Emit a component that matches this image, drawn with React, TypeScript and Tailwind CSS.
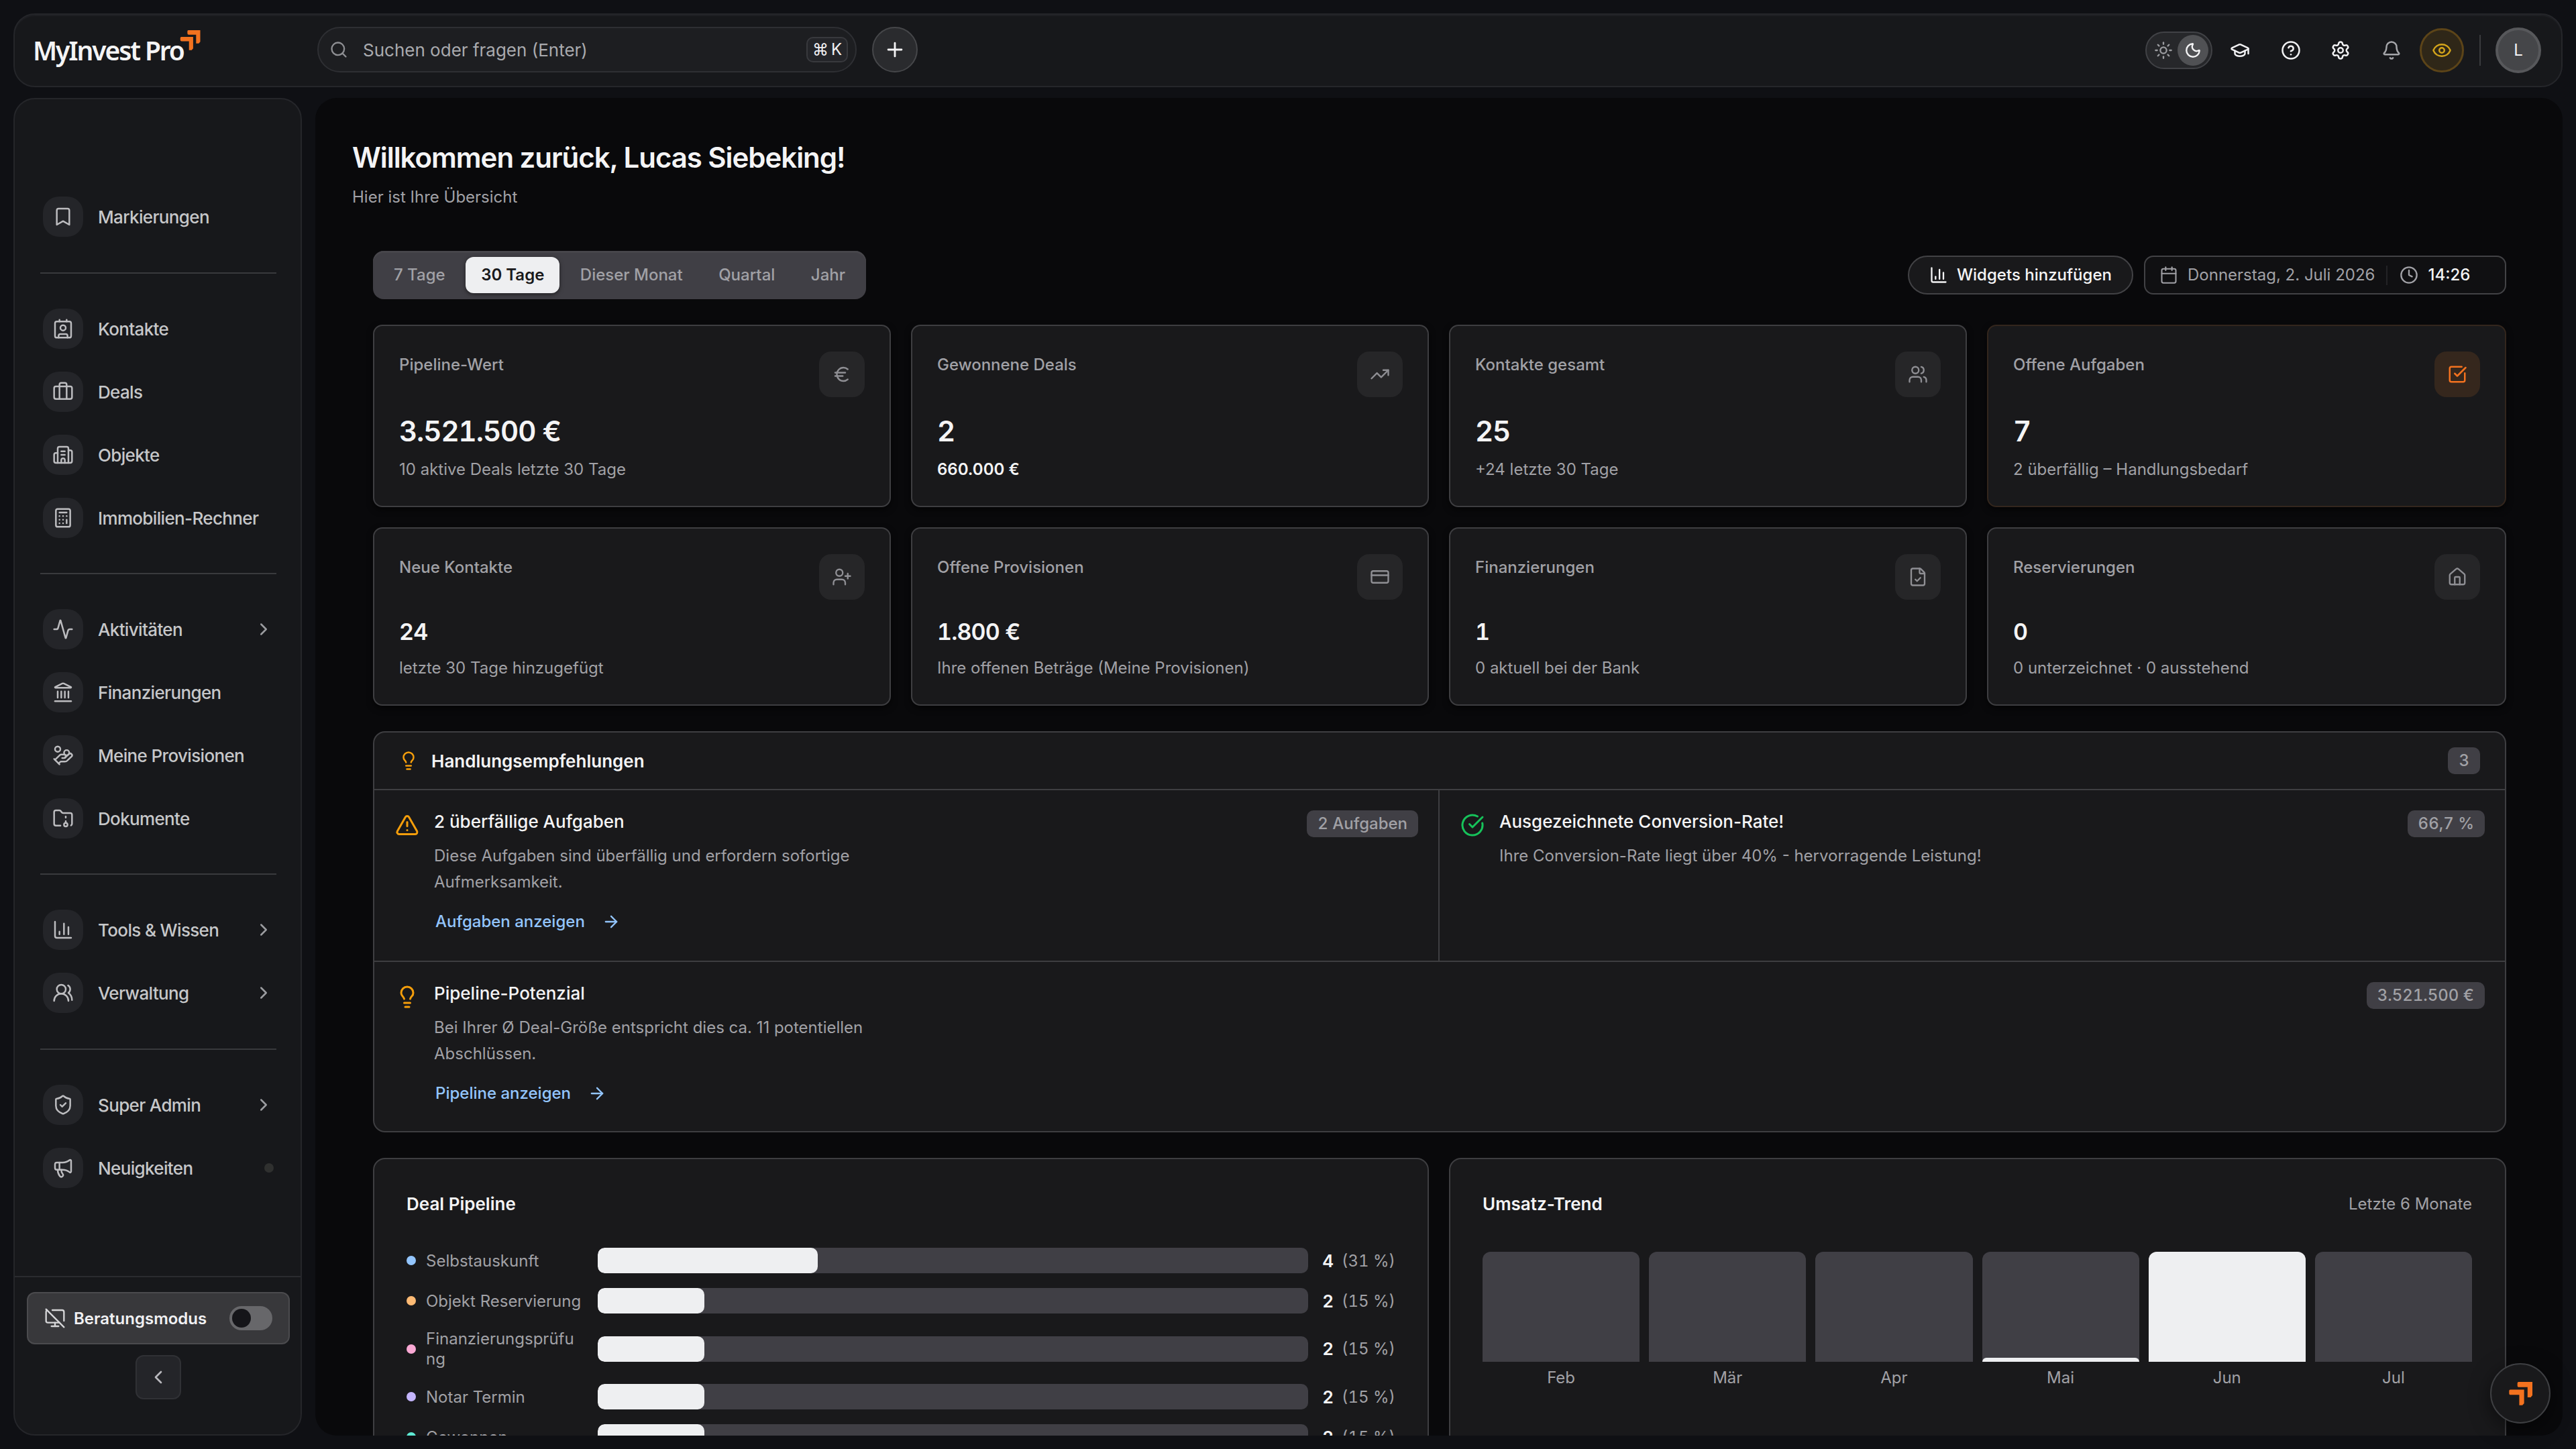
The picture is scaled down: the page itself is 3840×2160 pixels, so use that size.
import type { ReactNode } from "react";
import {
  Activity, ArrowRight, Bell, Bookmark, Briefcase, Building2, Calculator, Calendar, ChartColumn,
  ChevronLeft, ChevronRight, CircleCheckBig, CircleQuestionMark, Clock, Contact, CreditCard, Euro, Eye,
  FileCheck, FolderArchive, GraduationCap, HandCoins, House, Landmark, Lightbulb, Megaphone, MonitorOff,
  Moon, Plus, Search, Settings, ShieldCheck, SquareCheckBig, Sun, TrendingUp, TriangleAlert, UserPlus,
  Users, UsersRound, type LucideIcon,
} from "lucide-react";

function ArrowMark({ className }: { className: string }) {
  return (
    <svg viewBox="0 0 34 34" className={className} fill="#f3721f">
      <path d="M14 0H34V19.5L31.5 22.3H27V7.6H14.5Q12.3 7.6 12.3 5V2Q12.3 0 14 0Z" />
      <path d="M2 11.2H22V31L19.5 33.8H15V18.8H2.5Q0.3 18.8 0.3 16.2V13.2Q0.3 11.2 2 11.2Z" />
    </svg>
  );
}

type NavItem = { label: string; icon: LucideIcon; more?: boolean; dot?: boolean };

const navGroups: NavItem[][] = [
  [{ label: "Markierungen", icon: Bookmark }],
  [
    { label: "Kontakte", icon: Contact },
    { label: "Deals", icon: Briefcase },
    { label: "Objekte", icon: Building2 },
    { label: "Immobilien-Rechner", icon: Calculator },
  ],
  [
    { label: "Aktivitäten", icon: Activity, more: true },
    { label: "Finanzierungen", icon: Landmark },
    { label: "Meine Provisionen", icon: HandCoins },
    { label: "Dokumente", icon: FolderArchive },
  ],
  [
    { label: "Tools & Wissen", icon: ChartColumn, more: true },
    { label: "Verwaltung", icon: UsersRound, more: true },
  ],
  [
    { label: "Super Admin", icon: ShieldCheck, more: true },
    { label: "Neuigkeiten", icon: Megaphone, dot: true },
  ],
];

function Sidebar() {
  return (
    <aside className="flex w-[430px] shrink-0 flex-col rounded-[32px] border-2 border-[#25262a] bg-[#17181b]">
      <nav className="flex-1 pt-[145px] pl-[38px] pr-[36px]">
        {navGroups.map((group, gi) => (
          <div key={gi}>
            {gi > 0 && <div className={`${gi === 1 || gi === 4 ? "mt-[53px]" : "mt-[52px]"} mb-[52px] h-[2px] bg-[#393a3d]`} />}
            <div className="flex flex-col gap-[34px]">
              {group.map(({ label, icon: Icon, more, dot }) => (
                <div key={label} className="flex h-[60px] items-center pl-1">
                  <span className="flex size-[60px] items-center justify-center rounded-[24px] bg-[#242529]">
                    <Icon className="size-8 text-[#bdbdc0]" strokeWidth={1.85} />
                  </span>
                  <span className="ml-[22px] text-[26px] font-medium tracking-tight whitespace-nowrap text-[#c6c7c9]">{label}</span>
                  {more && <ChevronRight className="mr-[4px] ml-auto size-[30px] text-[#9b9ca0]" strokeWidth={2} />}
                  {dot && <span className="mr-[4px] ml-auto size-[14px] rounded-full bg-[#2f302f]" />}
                </div>
              ))}
            </div>
          </div>
        ))}
      </nav>
      <div className="flex h-[236px] flex-col items-center border-t-2 border-[#2a2b2f] pt-[22px] pl-[2px]">
        <div className="flex h-[78px] w-[392px] items-center rounded-[12px] border-2 border-[#4b4b4e] bg-[#38383b] pr-6 pl-6">
          <MonitorOff className="size-[32px] text-[#d6d6d8]" strokeWidth={1.75} />
          <span className="ml-[12px] pt-[1px] text-[24px] font-semibold text-[#f1f1f3]">Beratungsmodus</span>
          <span className="ml-auto flex h-9 w-16 items-center rounded-full bg-[#67676a] px-1">
            <span className="size-7 rounded-full bg-[#151519]" />
          </span>
        </div>
        <button className="mt-4 flex h-[66px] w-[68px] items-center justify-center rounded-[12px] border-2 border-[#303135] bg-[#242529]">
          <ChevronLeft className="size-8 text-[#b9b9bd]" strokeWidth={2} />
        </button>
      </div>
    </aside>
  );
}

function Header() {
  return (
    <header className="flex h-[110px] shrink-0 items-center rounded-[32px] border-2 border-[#25262a] bg-[#17181b] pr-[30px] pl-[27px] shadow-[inset_0_2px_0_#1e1f23]">
      <div className="relative w-[424px] shrink-0">
        <span className="font-['Noto_Sans'] text-[39px] leading-[60px] font-semibold tracking-[-2.15px] whitespace-nowrap text-[#f4f4f5]">MyInvest Pro</span>
        <ArrowMark className="absolute top-0 left-[219px] h-[30px] w-[31px]" />
      </div>
      <div className="mb-[2px] flex h-[68px] w-[804px] items-center rounded-full border-2 border-[#2e2f33] bg-[#1d1e21] pr-[11px] pl-4">
        <Search className="size-[28px] text-[#8e8f93]" strokeWidth={2} />
        <span className="ml-[22px] text-[26px] whitespace-nowrap text-[#a9aaae]">Suchen oder fragen (Enter)</span>
        <kbd className="ml-auto flex h-[38px] w-[62px] items-center justify-center gap-[4px] rounded-[10px] border-2 border-[#38393d] bg-[#242529] font-[Inter] text-[24px] text-[#f1f1f3]">
          <span>⌘</span><span>K</span>
        </kbd>
      </div>
      <button className="mb-[2px] ml-[23px] flex size-[68px] items-center justify-center rounded-full border-2 border-[#46474a] bg-[#2a2b2e]">
        <Plus className="size-[34px] text-[#f4f4f5]" strokeWidth={2} />
      </button>

      <div className="mb-[1px] ml-auto flex items-center">
        <div className="flex h-[56px] w-[100px] items-center rounded-full border-2 border-[#414246] bg-[#26272a] pr-1 pl-[11px]">
          <Sun className="size-[28px] text-[#9c9da1]" strokeWidth={2} />
          <span className="ml-auto flex size-[46px] items-center justify-center rounded-full bg-[#505154]">
            <Moon className="size-[26px] text-[#f4f4f5]" strokeWidth={2.2} />
          </span>
        </div>
        <GraduationCap className="ml-[26px] size-[30px] text-[#f1f1f3]" strokeWidth={2} />
        <CircleQuestionMark className="ml-[46px] size-[30px] text-[#f1f1f3]" strokeWidth={2} />
        <Settings className="ml-[44px] size-[30px] text-[#f1f1f3]" strokeWidth={2} />
        <Bell className="ml-[46px] size-[30px] text-[#a5a6aa]" strokeWidth={2} />
        <span className="ml-[27px] flex size-[66px] items-center justify-center rounded-full border-[3px] border-[#5c4418] bg-[#2f2718]">
          <Eye className="size-[30px] text-[#d3a41b]" strokeWidth={2} />
        </span>
        <span className="ml-[23px] h-[46px] w-[2px] bg-[#3a3b3e]" />
        <span className="ml-[22px] flex size-[68px] items-center justify-center rounded-full border-4 border-[#57585b] bg-[#454649] text-[24px] text-[#f4f4f5]">L</span>
      </div>
    </header>
  );
}

const ranges = ["7 Tage", "30 Tage", "Dieser Monat", "Quartal", "Jahr"];

function Toolbar() {
  return (
    <div className="flex h-[72px] items-center">
      <div className="flex h-[72px] items-center gap-[7.5px] rounded-[16px] bg-[#403f45] px-2 shadow-[inset_0_3px_0_#47464b]">
        {ranges.map((r) => (
          <span
            key={r}
            className={
              r === "30 Tage"
                ? "flex h-[54px] items-center rounded-[12px] bg-[#eeeff1] px-[23px] text-[24px] font-semibold text-[#19191b] shadow-[0_2px_6px_rgba(0,0,0,0.5)]"
                : "flex h-[54px] items-center px-[23px] text-[24px] font-medium text-[#a1a1a6]"
            }
          >
            {r}
          </span>
        ))}
      </div>
      <button className="ml-auto flex h-[58px] w-[336px] items-center rounded-full border-2 border-[#424245] bg-[#19191b] pl-[30px] text-[24px] font-medium whitespace-nowrap text-[#f4f4f5]">
        <ChartColumn className="size-[28px]" strokeWidth={2} />
        <span className="ml-[13px]">Widgets hinzufügen</span>
      </button>
      <div className="ml-4 flex h-[58px] w-[540px] items-center rounded-[14px] border-2 border-[#424245] bg-[#101012] pl-[21px] text-[24px] whitespace-nowrap text-[#a1a1a6]">
        <Calendar className="size-[28px]" strokeWidth={1.75} />
        <span className="ml-[14px]">Donnerstag, 2. Juli 2026</span>
        <span className="ml-[17px] h-[29px] w-[2px] bg-[#232326]" />
        <Clock className="ml-[18px] size-[28px]" strokeWidth={2} />
        <span className="ml-[14px] font-medium text-[#f4f4f5]">14:26</span>
      </div>
    </div>
  );
}

type Kpi = { label: string; icon: LucideIcon; value: string; note: string; strong?: boolean; alert?: boolean };

const kpisTop: Kpi[] = [
  { label: "Pipeline-Wert", icon: Euro, value: "3.521.500 €", note: "10 aktive Deals letzte 30 Tage" },
  { label: "Gewonnene Deals", icon: TrendingUp, value: "2", note: "660.000 €", strong: true },
  { label: "Kontakte gesamt", icon: Users, value: "25", note: "+24 letzte 30 Tage" },
  { label: "Offene Aufgaben", icon: SquareCheckBig, value: "7", note: "2 überfällig – Handlungsbedarf", alert: true },
];
const kpisBottom: Kpi[] = [
  { label: "Neue Kontakte", icon: UserPlus, value: "24", note: "letzte 30 Tage hinzugefügt" },
  { label: "Offene Provisionen", icon: CreditCard, value: "1.800 €", note: "Ihre offenen Beträge (Meine Provisionen)" },
  { label: "Finanzierungen", icon: FileCheck, value: "1", note: "0 aktuell bei der Bank" },
  { label: "Reservierungen", icon: House, value: "0", note: "0 unterzeichnet · 0 ausstehend" },
];

function KpiCard({ kpi, large }: { kpi: Kpi; large?: boolean }) {
  const Icon = kpi.icon;
  return (
    <div
      className={`${large ? "h-[272px]" : "h-[266px]"} ${kpi.alert ? "border-[#33261d]" : "border-[#3e3e41]"} rounded-[14px] border-2 bg-[#19191b] pt-[38px] pr-[37px] pl-[37px] shadow-[0_4px_10px_rgba(0,0,0,0.6)]`}
    >
      <div className="flex items-start justify-between">
        <span className="text-[24px] leading-[40px] font-medium text-[#a1a1a6]">{kpi.label}</span>
        <span className={`flex size-[68px] items-center justify-center rounded-[18px] ${kpi.alert ? "bg-[#35271d] text-[#f3721f]" : "bg-[#262628] text-[#8f8f94]"}`}>
          <Icon className="mb-px size-[30px]" strokeWidth={kpi.alert ? 2 : 1.9} />
        </span>
      </div>
      <div className={`font-semibold tracking-[-0.025em] text-[#f4f4f5] tabular-nums ${large ? "mt-[27px] text-[42px] leading-[48px]" : "mt-[26px] text-[34px] leading-[44px]"}`}>
        {kpi.value}
      </div>
      <div className={`text-[24px] leading-[36px] ${large ? "mt-[15px]" : "mt-[14px]"} ${kpi.strong ? "font-semibold text-[#f4f4f5]" : "text-[#a1a1a6]"}`}>
        {kpi.note}
      </div>
    </div>
  );
}

function Badge({ children }: { children: ReactNode }) {
  return (
    <span className="flex h-10 shrink-0 items-center rounded-[10px] bg-[#403f45] px-4 text-[24px] font-medium whitespace-nowrap text-[#a1a1a6] tabular-nums">{children}</span>
  );
}

function Advice({ icon, title, lines, link, badge }: { icon: ReactNode; title: string; lines: string[]; link?: string; badge: string }) {
  return (
    <div className="flex flex-1 items-start pt-[29px] pr-[30px] pl-[31px]">
      <span className="mt-[5px] size-[36px] shrink-0">{icon}</span>
      <div className="ml-[22px]">
        <div className="text-[26px] leading-[36px] font-medium text-[#f4f4f5]">{title}</div>
        <div className="mt-[13px] text-[24px] leading-[39px] text-[#a1a1a6]">
          {lines.map((l) => <div key={l}>{l}</div>)}
        </div>
        {link && (
          <div className="mt-[22px] flex items-center pl-[2px] text-[24px] leading-[36px] font-medium text-[#93c5fd]">
            {link}
            <ArrowRight className="ml-[25px] size-[28px]" strokeWidth={2} />
          </div>
        )}
      </div>
      <span className="mt-px ml-auto"><Badge>{badge}</Badge></span>
    </div>
  );
}

function Recommendations() {
  return (
    <section className="mt-[38px] flex h-[598px] flex-col overflow-hidden rounded-[18px] border-2 border-[#3e3e41] bg-[#19191b]">
      <div className="flex h-[86px] shrink-0 items-center border-b-2 border-[#3e3e41] pr-[37px] pl-[36px]">
        <Lightbulb className="size-[30px] text-[#f59e0b]" strokeWidth={2} />
        <span className="ml-[19px] text-[26px] font-semibold text-[#f4f4f5]">Handlungsempfehlungen</span>
        <span className="ml-auto"><Badge>3</Badge></span>
      </div>
      <div className="flex h-[256px] shrink-0 border-b-2 border-[#3e3e41]">
        <div className="flex w-[1588px] border-r-2 border-[#3e3e41]">
          <Advice
            icon={<TriangleAlert className="size-[36px] text-[#f59e0b]" strokeWidth={2} />}
            title="2 überfällige Aufgaben"
            lines={["Diese Aufgaben sind überfällig und erfordern sofortige", "Aufmerksamkeit."]}
            link="Aufgaben anzeigen"
            badge="2 Aufgaben"
          />
        </div>
        <Advice
          icon={<CircleCheckBig className="size-[36px] text-[#16c25a]" strokeWidth={2} />}
          title="Ausgezeichnete Conversion-Rate!"
          lines={["Ihre Conversion-Rate liegt über 40% - hervorragende Leistung!"]}
          badge="66,7 %"
        />
      </div>
      <Advice
        icon={<Lightbulb className="size-[36px] text-[#f59e0b]" strokeWidth={2} />}
        title="Pipeline-Potenzial"
        lines={["Bei Ihrer Ø Deal-Größe entspricht dies ca. 11 potentiellen", "Abschlüssen."]}
        link="Pipeline anzeigen"
        badge="3.521.500 €"
      />
    </section>
  );
}

const stages = [
  { label: "Selbstauskunft", color: "#93c5fd", count: 4, share: 31 },
  { label: "Objekt Reservierung", color: "#fdba74", count: 2, share: 15 },
  { label: "Finanzierungsprüfung", color: "#f9a8d4", count: 2, share: 15 },
  { label: "Notar Termin", color: "#c4b5fd", count: 2, share: 15 },
  { label: "Gewonnen", color: "#5eead4", count: 2, share: 15 },
];

const months = [
  { label: "Feb", value: 0 },
  { label: "Mär", value: 0 },
  { label: "Apr", value: 0 },
  { label: "Mai", value: 3.8 },
  { label: "Jun", value: 100 },
  { label: "Jul", value: 0 },
];

function Charts() {
  return (
    <div className="mt-[38px] grid grid-cols-[1574px_1fr] gap-[30px]">
      <section className="h-[600px] rounded-[18px] border-2 border-[#3e3e41] bg-[#19191b] pt-[48px] pr-[48px] pl-[48px]">
        <h2 className="text-[26px] leading-[38px] font-semibold text-[#f4f4f5]">Deal Pipeline</h2>
        <div className="mt-[46px] flex flex-col gap-[22px]">
          {stages.map((s) => (
            <div key={s.label} className="flex min-h-[38px] items-center">
              <span className="size-[14px] shrink-0 rounded-full" style={{ backgroundColor: s.color }} />
              <span className="ml-[15px] w-[232px] shrink-0 pt-px text-[24px] leading-[30px] break-all text-[#a1a1a6]">{s.label}</span>
              <span className="ml-[24px] h-[38px] w-[1059px] shrink-0 overflow-hidden rounded-[10px] bg-[#403f45]">
                <span className="block h-full rounded-[10px] bg-[#eeeff1]" style={{ width: `${s.share}%` }} />
              </span>
              <span className="ml-auto flex items-center gap-[12px] pt-px text-[24px] leading-[36px] whitespace-nowrap text-[#a1a1a6] tabular-nums">
                <b className="text-[26px] font-semibold text-[#f4f4f5]">{s.count}</b>
                <span>({s.share} %)</span>
              </span>
            </div>
          ))}
        </div>
      </section>
      <section className="h-[600px] rounded-[18px] border-2 border-[#3e3e41] bg-[#19191b] pt-[48px] pr-[49px] pl-[48px]">
        <div className="flex items-center justify-between">
          <h2 className="text-[26px] leading-[38px] font-semibold text-[#f4f4f5]">Umsatz-Trend</h2>
          <span className="text-[24px] leading-[36px] text-[#a1a1a6]">Letzte 6 Monate</span>
        </div>
        <div className="mt-[52px] grid grid-cols-6 gap-[14px]">
          {months.map((m) => (
            <div key={m.label} className="flex flex-col items-center">
              <div className="flex h-[164px] w-full flex-col justify-end overflow-hidden rounded-t-[12px] bg-[#403f45]">
                <div className="w-full rounded-t-[6px] bg-[#eeeff1]" style={{ height: `${m.value}%` }} />
              </div>
              <span className="mt-[6px] text-[24px] leading-[36px] text-[#a1a1a6]">{m.label}</span>
            </div>
          ))}
        </div>
      </section>
    </div>
  );
}

export default function App() {
  return (
    <div className="relative flex h-[2160px] w-[3840px] flex-col gap-4 overflow-hidden bg-[#0f1014] p-5 font-[Inter,sans-serif] antialiased">
      <Header />
      <div className="flex h-[1994px] gap-5">
        <Sidebar />
        <main className="w-[3350px] overflow-hidden rounded-[32px] bg-[#09090b] pt-[65px]">
          <div className="pl-[55px]">
            <h1 className="text-[42px] leading-[48px] font-semibold tracking-[-0.025em] text-[#f4f4f5]">Willkommen zurück, Lucas Siebeking!</h1>
            <p className="mt-[17px] text-[24px] leading-[36px] text-[#a1a1a6]">Hier ist Ihre Übersicht</p>
          </div>
          <div className="mt-[62px] pr-[84px] pl-[86px]">
            <Toolbar />
            <div className="mt-[38px] grid grid-cols-[772px_772px_772px_1fr] gap-[30px]">
              {kpisTop.map((k) => <KpiCard key={k.label} kpi={k} large />)}
              {kpisBottom.map((k) => <KpiCard key={k.label} kpi={k} />)}
            </div>
            <Recommendations />
            <Charts />
          </div>
        </main>
      </div>
      <button className="absolute right-[38px] bottom-[38px] flex size-[90px] items-center justify-center rounded-full border-2 border-[#3e3f42] bg-[#19191b] shadow-[0_8px_30px_rgba(0,0,0,0.5)]">
        <ArrowMark className="h-[35px] w-[35px]" />
      </button>
    </div>
  );
}
